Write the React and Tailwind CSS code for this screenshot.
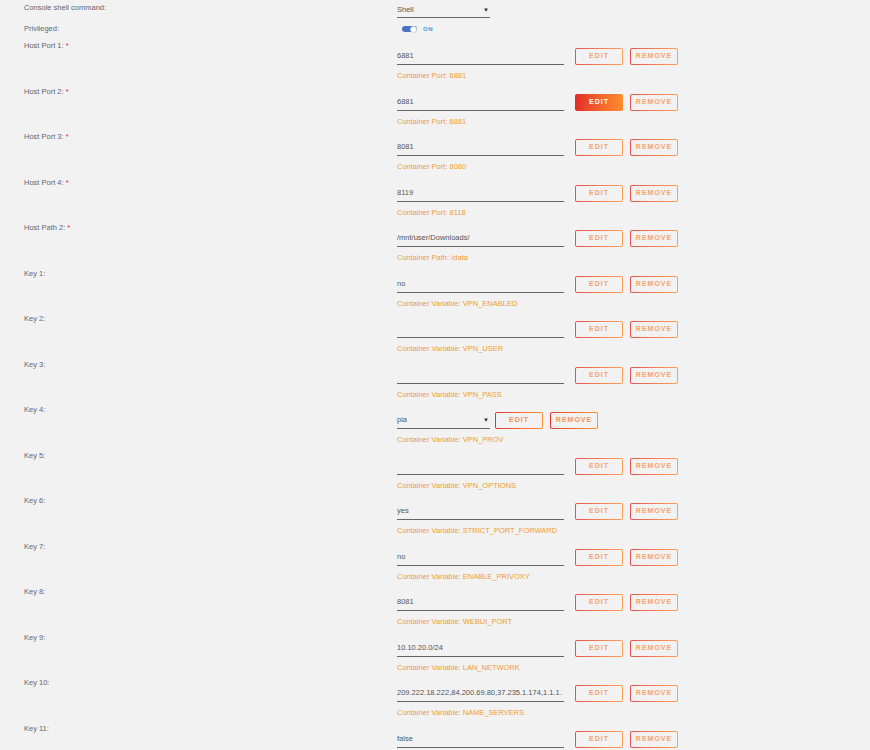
import { useState } from "react";

const rows = [
  { label: "Host Port 1:", req: true, value: "6881", note: "Container Port: 6881" },
  { label: "Host Port 2:", req: true, value: "6881", note: "Container Port: 6881", active: true },
  { label: "Host Port 3:", req: true, value: "8081", note: "Container Port: 8080" },
  { label: "Host Port 4:", req: true, value: "8119", note: "Container Port: 8118" },
  { label: "Host Path 2:", req: true, value: "/mnt/user/Downloads/", note: "Container Path: /data" },
  { label: "Key 1:", value: "no", note: "Container Variable: VPN_ENABLED" },
  { label: "Key 2:", value: "", note: "Container Variable: VPN_USER" },
  { label: "Key 3:", value: "", note: "Container Variable: VPN_PASS" },
  { label: "Key 4:", value: "pia", note: "Container Variable: VPN_PROV", select: true },
  { label: "Key 5:", value: "", note: "Container Variable: VPN_OPTIONS" },
  { label: "Key 6:", value: "yes", note: "Container Variable: STRICT_PORT_FORWARD" },
  { label: "Key 7:", value: "no", note: "Container Variable: ENABLE_PRIVOXY" },
  { label: "Key 8:", value: "8081", note: "Container Variable: WEBUI_PORT" },
  { label: "Key 9:", value: "10.10.20.0/24", note: "Container Variable: LAN_NETWORK" },
  {
    label: "Key 10:",
    value: "209.222.18.222,84.200.69.80,37.235.1.174,1.1.1.",
    note: "Container Variable: NAME_SERVERS",
  },
  { label: "Key 11:", value: "false", note: "" },
];

const Btn = ({ children, active, strong }) => {
  if (active) {
    return (
      <button className="w-[48px] h-[17px] rounded-[2px] bg-linear-to-r from-[#e22828] to-[#ff8c2f] text-white text-[7px] font-bold tracking-[1px] flex items-center justify-center">
        {children}
      </button>
    );
  }
  return (
    <button
      className={`w-[48px] h-[17px] rounded-[2px] p-px bg-linear-to-r from-[#e22828] to-[#ff8c2f] ${
        strong ? "opacity-95" : "opacity-80"
      }`}
    >
      <span className="w-full h-full rounded-[1px] bg-[#f2f2f2] flex items-center justify-center text-[#f7904a] text-[7px] font-bold tracking-[1px]">
        {children}
      </span>
    </button>
  );
};

const Arrow = () => <span className="text-[6px] text-[#333] leading-none">▼</span>;

export default function App() {
  const [privileged] = useState(true);

  return (
    <div
      className="w-[870px] h-[750px] overflow-hidden bg-[#f2f2f2] text-[#666] text-[7.5px]"
      style={{ fontFamily: '"Liberation Sans", Arial, sans-serif' }}
    >
      {/* console shell */}
      <div className="grid grid-cols-[397px_1fr] h-[24px] pt-[3px]">
        <div className="pl-[24px] leading-[10px]">Console shell command:</div>
        <div className="w-[93px] h-[15px] border-b border-[#666] flex items-center justify-between pr-[1px] text-[#555]">
          <span>Shell</span>
          <Arrow />
        </div>
      </div>

      {/* privileged */}
      <div className="grid grid-cols-[397px_1fr] h-[17px]">
        <div className="pl-[24px] leading-[10px]">Privileged:</div>
        <div className="flex items-center gap-[6px] pl-[5px] h-[10px]">
          <div className="w-[15px] h-[6px] rounded-full bg-[#4a72c6] relative">
            <div className="absolute right-0 top-[-0.5px] w-[7px] h-[7px] rounded-full bg-white border border-[#ccc]" />
          </div>
          <span className="text-[#3b9ede] text-[6px] font-bold tracking-[0.5px]">
            {privileged ? "ON" : "OFF"}
          </span>
        </div>
      </div>

      {rows.map((row) => (
        <div key={row.label} className="grid grid-cols-[397px_1fr] h-[45.5px]">
          <div className="pl-[24px] leading-[10px]">
            {row.label}
            {row.req && <span className="text-[#e22828]"> *</span>}
          </div>
          <div className="pt-[7px]">
            <div className="flex items-end">
              {row.select ? (
                <div className="w-[93px] h-[17px] border-b border-[#666] flex items-center justify-between pr-[1px] text-[#555]">
                  <span>{row.value}</span>
                  <Arrow />
                </div>
              ) : (
                <div className="w-[167px] h-[17px] border-b border-[#666] flex items-center text-[#555] overflow-hidden whitespace-nowrap">
                  {row.value}
                </div>
              )}
              <div className={`flex gap-[7px] ${row.select ? "ml-[5px]" : "ml-[11px]"}`}>
                <Btn active={row.active} strong={row.select}>
                  EDIT
                </Btn>
                <Btn strong={row.select}>REMOVE</Btn>
              </div>
            </div>
            {row.note && (
              <div className="mt-[6px] text-[#f0a030] leading-[10px]">{row.note}</div>
            )}
          </div>
        </div>
      ))}
    </div>
  );
}
